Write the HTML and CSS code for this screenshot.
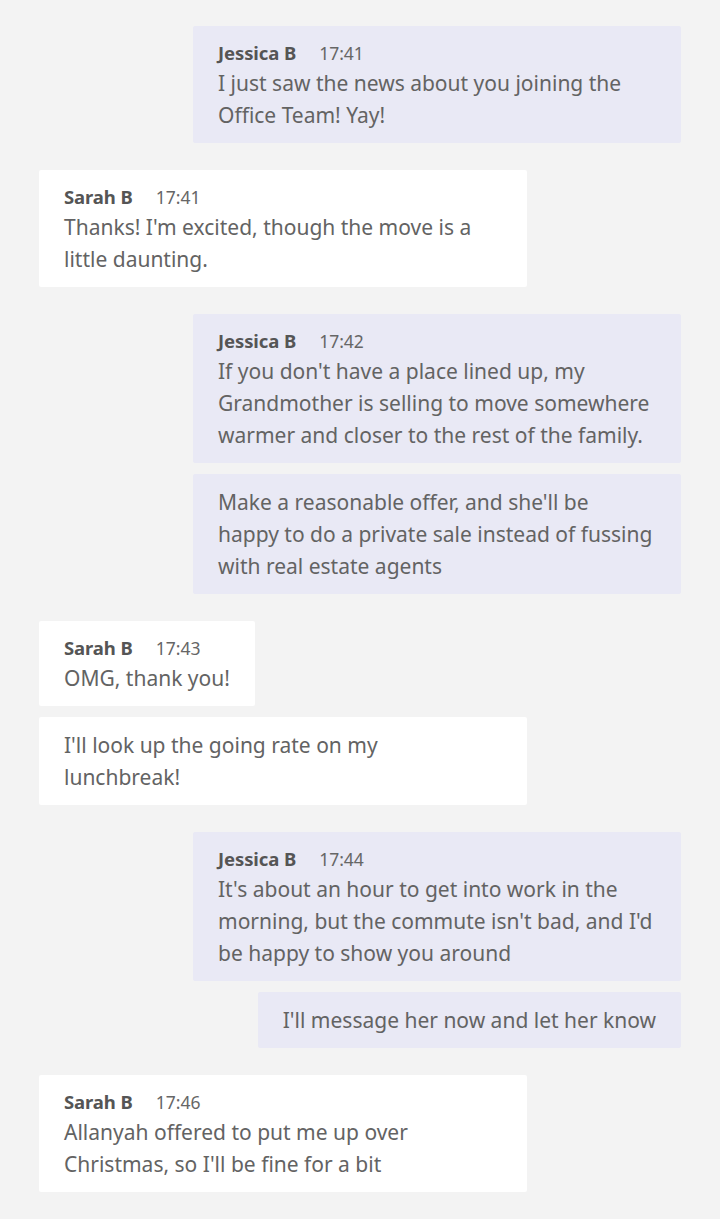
FILE: index.html
```html
<!DOCTYPE html>
<html>
<head>
<meta charset="utf-8">
<link rel="stylesheet" href="styles.css">
</head>
<body>
<div class="chat">
  <div class="group mine">
    <div class="bubble">
      <div class="meta"><span class="name">Jessica B</span><span class="time">17:41</span></div>
      <div class="text">I just saw the news about you joining the<br>Office Team! Yay!</div>
    </div>
  </div>
  <div class="group theirs">
    <div class="bubble">
      <div class="meta"><span class="name">Sarah B</span><span class="time">17:41</span></div>
      <div class="text">Thanks! I'm excited, though the move is a<br>little daunting.</div>
    </div>
  </div>
  <div class="group mine">
    <div class="bubble">
      <div class="meta"><span class="name">Jessica B</span><span class="time">17:42</span></div>
      <div class="text">If you don't have a place lined up, my<br>Grandmother is selling to move somewhere<br>warmer and closer to the rest of the family.</div>
    </div>
    <div class="bubble">
      <div class="text">Make a reasonable offer, and she'll be<br>happy to do a private sale instead of fussing<br>with real estate agents</div>
    </div>
  </div>
  <div class="group theirs">
    <div class="bubble fit">
      <div class="meta"><span class="name">Sarah B</span><span class="time">17:43</span></div>
      <div class="text">OMG, thank you!</div>
    </div>
    <div class="bubble">
      <div class="text">I'll look up the going rate on my<br>lunchbreak!</div>
    </div>
  </div>
  <div class="group mine">
    <div class="bubble">
      <div class="meta"><span class="name">Jessica B</span><span class="time">17:44</span></div>
      <div class="text">It's about an hour to get into work in the<br>morning, but the commute isn't bad, and I'd<br>be happy to show you around</div>
    </div>
    <div class="bubble fit">
      <div class="text">I'll message her now and let her know</div>
    </div>
  </div>
  <div class="group theirs">
    <div class="bubble">
      <div class="meta"><span class="name">Sarah B</span><span class="time">17:46</span></div>
      <div class="text">Allanyah offered to put me up over<br>Christmas, so I'll be fine for a bit</div>
    </div>
  </div>
</div>
</body>
</html>
```

FILE: styles.css
```css
html, body {
  margin: 0;
  padding: 0;
  background: #f3f3f3;
}
body {
  font-family: "Noto Sans", "Open Sans", sans-serif;
  color: #636363;
  width: 720px;
  height: 1219px;
  overflow: hidden;
}
.chat {
  display: flex;
  flex-direction: column;
  gap: 27px;
  padding: 26px 39px 0 39px;
}
.group {
  display: flex;
  flex-direction: column;
  gap: 11px;
}
.group.mine {
  align-items: flex-end;
}
.group.theirs {
  align-items: flex-start;
}
.bubble {
  box-sizing: border-box;
  width: 488px;
  padding: 12px 25px 12px 25px;
  border-radius: 2px;
}
.bubble.fit {
  width: auto;
}
.mine .bubble {
  background: #e9e9f5;
}
.theirs .bubble {
  background: #ffffff;
}
.meta {
  height: 29px;
  line-height: 29px;
  display: flex;
  align-items: baseline;
  gap: 23px;
}
.name {
  font-size: 18.5px;
  font-weight: 700;
  color: #555555;
  letter-spacing: -0.1px;
}
.time {
  font-size: 17.5px;
  color: #666666;
}
.text {
  font-size: 21px;
  line-height: 32px;
  white-space: nowrap;
}
```
